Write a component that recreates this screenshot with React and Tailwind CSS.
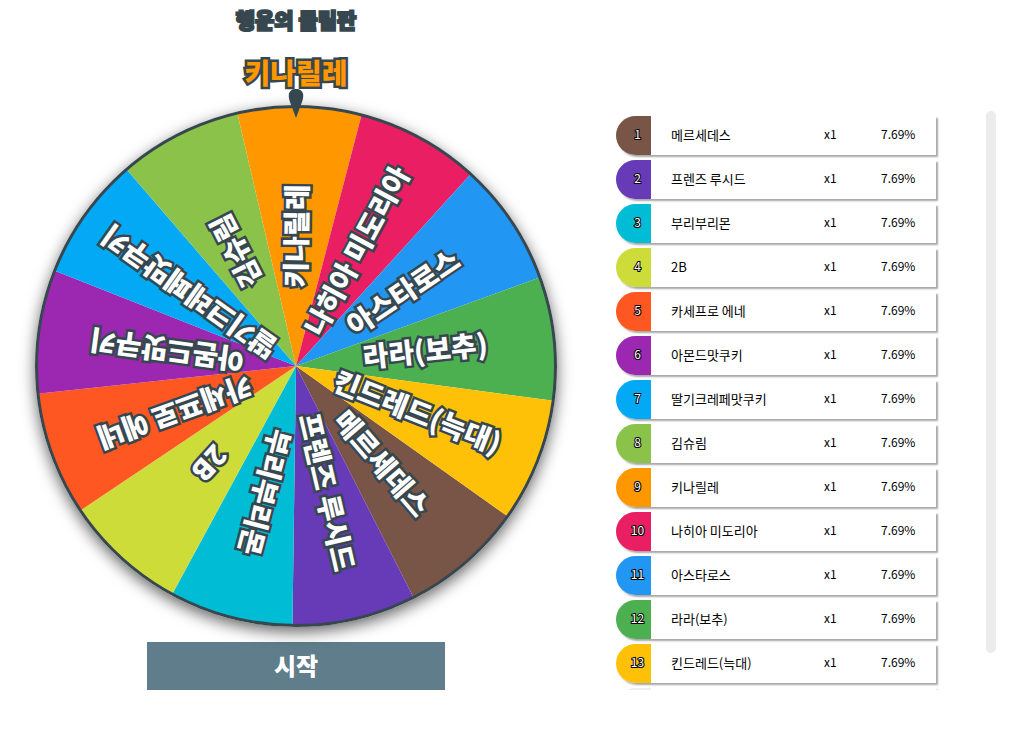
import React from "react";

const ITEMS = [
  { name: "메르세데스", fill: "fill-[#795548]", bg: "bg-[#795548]" },
  { name: "프렌즈 루시드", fill: "fill-[#673ab7]", bg: "bg-[#673ab7]" },
  { name: "부리부리몬", fill: "fill-[#00bcd4]", bg: "bg-[#00bcd4]" },
  { name: "2B", fill: "fill-[#cddc39]", bg: "bg-[#cddc39]" },
  { name: "카세프로 에네", fill: "fill-[#ff5722]", bg: "bg-[#ff5722]" },
  { name: "아몬드맛쿠키", fill: "fill-[#9c27b0]", bg: "bg-[#9c27b0]" },
  { name: "딸기크레페맛쿠키", fill: "fill-[#03a9f4]", bg: "bg-[#03a9f4]" },
  { name: "김슈림", fill: "fill-[#8bc34a]", bg: "bg-[#8bc34a]" },
  { name: "키나릴레", fill: "fill-[#ff9800]", bg: "bg-[#ff9800]" },
  { name: "나히아 미도리아", fill: "fill-[#e91e63]", bg: "bg-[#e91e63]" },
  { name: "아스타로스", fill: "fill-[#2196f3]", bg: "bg-[#2196f3]" },
  { name: "라라(보추)", fill: "fill-[#4caf50]", bg: "bg-[#4caf50]" },
  { name: "킨드레드(늑대)", fill: "fill-[#ffc107]", bg: "bg-[#ffc107]" },
];

const RADIUS = 260;
const STEP = 360 / ITEMS.length;
// Angle of the first slice's leading edge, clockwise from east.
const START = 35.4;

function point(deg) {
  const a = (deg * Math.PI) / 180;
  return `${(RADIUS * Math.cos(a)).toFixed(2)} ${(RADIUS * Math.sin(a)).toFixed(2)}`;
}

function Wheel() {
  return (
    <svg viewBox="-261 -261 522 522" className="block w-full" role="img" aria-label="돌림판">
      {ITEMS.map((item, i) => {
        const from = START + i * STEP;
        return (
          <path
            key={item.name}
            className={item.fill}
            d={`M0 0L${point(from)}A${RADIUS} ${RADIUS} 0 0 1 ${point(from + STEP)}Z`}
          />
        );
      })}
      <circle r="259.5" className="fill-none stroke-[#37474f] stroke-3" />
      {ITEMS.map((item, i) => (
        <text
          key={item.name}
          transform={`rotate(${START + (i + 0.5) * STEP}) translate(130 0)`}
          textAnchor="middle"
          dy="9"
          className="fill-white stroke-[#37474f] stroke-5 text-[28px] font-black [paint-order:stroke] [stroke-linejoin:miter]"
        >
          {item.name}
        </text>
      ))}
    </svg>
  );
}

function Row({ index, item }) {
  return (
    <tr className="grid h-[39px] shrink-0 grid-cols-[35px_minmax(0,1fr)_60px_75px] items-center rounded-l-[20px] bg-white shadow-[2px_2px_2px_rgba(0,0,0,0.35)]">
      <td
        className={`flex h-full items-center justify-center rounded-l-[20px] pb-1 pl-2 text-white [paint-order:stroke] [-webkit-text-stroke:2px_black] ${item.bg}`}
      >
        {index}
      </td>
      <td className="truncate pb-0.5 pl-5 text-[13px] leading-5">{item.name}</td>
      <td className="pb-1 pl-[23px] leading-5">x1</td>
      <td className="pb-1 pl-5 leading-5">7.69%</td>
    </tr>
  );
}

export default function App() {
  return (
    <main className="grid grid-cols-[minmax(0,592fr)_minmax(0,422fr)] bg-white font-['Noto_Sans_CJK_KR',sans-serif] text-black">
      <section className="flex flex-col items-center px-[35px]">
        <h1 className="mt-1 text-[21px] leading-[30px] font-black text-[#37474f] [-webkit-text-stroke:2px_#37474f]">
          행운의 돌림판
        </h1>
        <p className="relative z-10 mt-[18px] text-[28px] leading-10 font-black text-[#ff9800] [paint-order:stroke] [-webkit-text-stroke:5px_#37474f]">
          키나릴레
        </p>
        <div className="relative mt-[13px] w-full max-w-[522px] rounded-full shadow-[0_5px_15px_rgba(0,0,0,0.6)]">
          <Wheel />
          <svg
            viewBox="0 0 16 32"
            className="absolute -top-[19px] left-1/2 h-8 w-4 -translate-x-1/2 fill-[#37474f]"
            aria-hidden="true"
          >
            <path d="M8 32L3.5 20C1.5 15 .5 12 .8 8.500C1.300 5 4 3 8 3S14.700 5 15.200 8.500C15.500 12 14.500 15 12.500 20Z" />
          </svg>
        </div>
        <button
          type="button"
          className="mt-[15px] h-12 w-[298px] max-w-full bg-[#607d8b] pb-0.5 text-2xl font-black text-white"
        >
          시작
        </button>
      </section>

      <section className="flex items-start pt-[111px] pr-[18px] pl-6">
        <table className="block h-[579px] min-w-0 flex-1 overflow-hidden pt-[5px] pr-[50px] text-left text-xs" aria-label="확률">
          <tbody className="flex flex-col gap-[5px]">
            {ITEMS.map((item, i) => (
              <Row key={item.name} index={i + 1} item={item} />
            ))}
            <tr className="flex h-[39px] shrink-0 rounded-l-[20px] shadow-[2px_2px_2px_rgba(0,0,0,0.35)]" aria-hidden="true">
              <td className="w-[35px] rounded-l-[20px] bg-[#eeeeee]" />
              <td className="flex-1 bg-white" />
            </tr>
          </tbody>
        </table>
        <div className="h-[542px] w-[10px] rounded-full bg-[#ececec]" />
      </section>
    </main>
  );
}
